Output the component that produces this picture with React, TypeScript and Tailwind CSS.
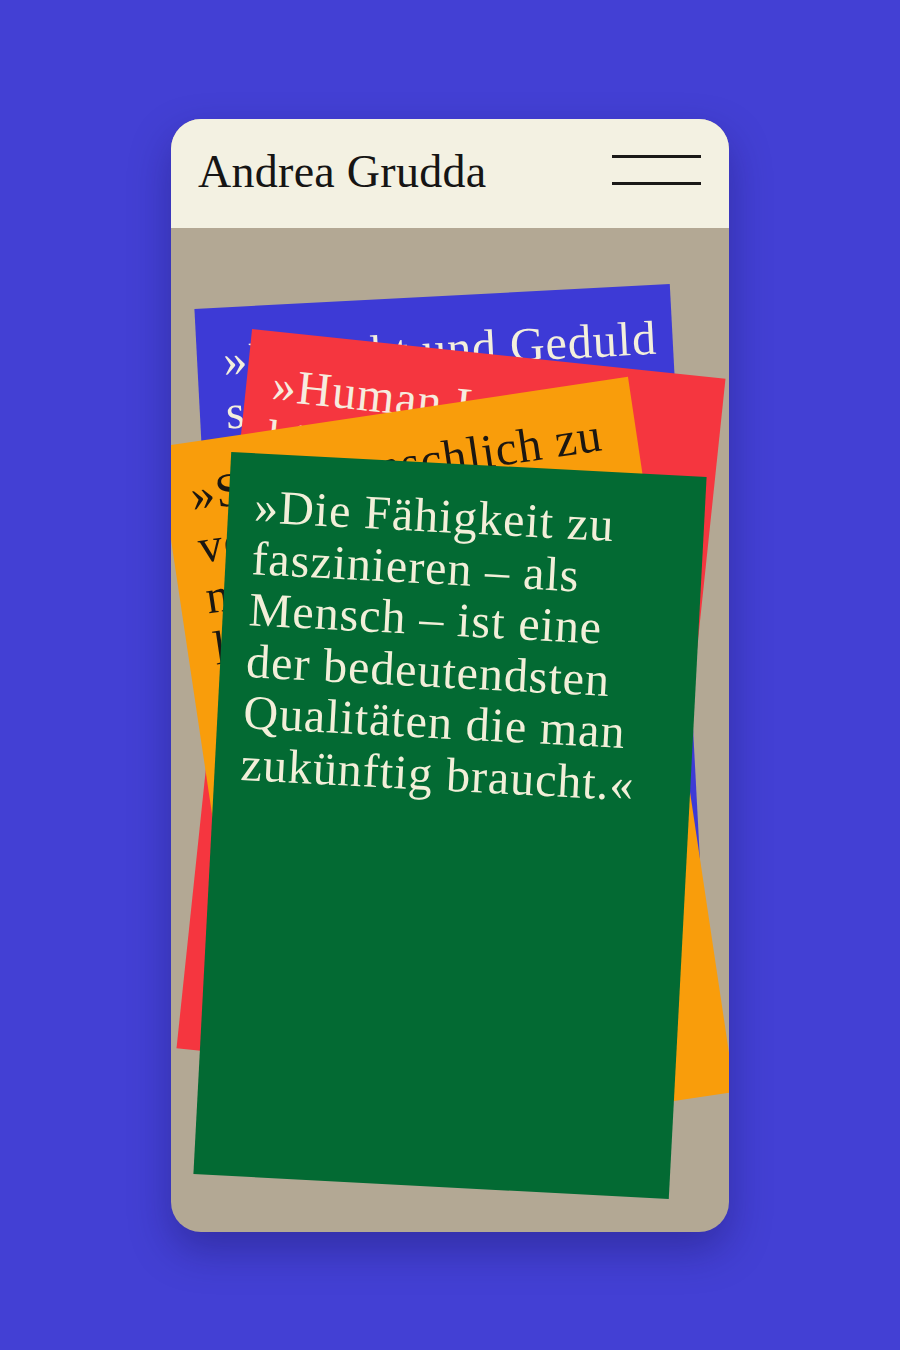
const serif = "font-['Liberation_Serif','DejaVu_Serif',serif]";

interface Quote {
  lines: string[];
  className: string;
}

const quotes: Quote[] = [
  {
    lines: ['»Respekt und Geduld', 'sind die Grundlage', 'für echtes', 'Vertrauen.«'],
    className: 'top-[68px] left-[42px] -rotate-3 bg-[#3d3ad6] text-[#f3efdc]'
  },
  {
    lines: ['»Human Leader', 'können Menschen', 'begeistern.«'],
    className: 'top-[124px] left-[42px] rotate-6 bg-[#f5363f] text-[#f6ecdf]'
  },
  {
    lines: ['»Sich menschlich zu', 'verhalten, ist', 'nicht immer', 'leicht.«'],
    className: 'top-[180px] left-[37px] -rotate-[8.5deg] bg-[#f99d0b] text-[#1b1712]'
  },
  {
    lines: [
      '»Die Fähigkeit zu',
      'faszinieren – als',
      'Mensch – ist eine',
      'der bedeutendsten',
      'Qualitäten die man',
      'zukünftig braucht.«'
    ],
    className: 'top-[236px] left-[41px] rotate-3 bg-[#036a33] text-[#f2efd9]'
  }
];

const App = () => {
  return (
    <div className="flex h-[1350px] w-full items-center justify-center bg-[#4340d4]">
      <div className="flex h-[1113px] w-[558px] flex-col overflow-hidden rounded-[30px] bg-[#b3a894] shadow-[0_18px_40px_rgba(20,15,80,0.35)]">
        <header className="flex h-[109px] shrink-0 items-center justify-between bg-[#f3f1e2] pl-[27px] pr-[28px]">
          <h1 className={`${serif} pb-[2px] text-[46px] leading-none tracking-[0.006em] text-[#161514]`}>
            Andrea Grudda
          </h1>
          <button aria-label="Menü" className="mb-[7px] flex w-[89px] flex-col gap-[24px]">
            <span className="block h-[3px] w-full bg-[#1a1917]" />
            <span className="block h-[3px] w-full bg-[#1a1917]" />
          </button>
        </header>

        <main className="relative flex-1 overflow-hidden">
          {quotes.map((quote) => (
            <article
              key={quote.lines[0]}
              className={`absolute h-[723px] w-[476px] px-[26px] pt-[27px] ${quote.className}`}
            >
              <p className={`${serif} text-[48px] leading-[51.5px] tracking-[0.02em]`}>
                {quote.lines.map((line) => (
                  <span key={line} className="block whitespace-nowrap">
                    {line}
                  </span>
                ))}
              </p>
            </article>
          ))}
        </main>
      </div>
    </div>
  );
};

export default App;
